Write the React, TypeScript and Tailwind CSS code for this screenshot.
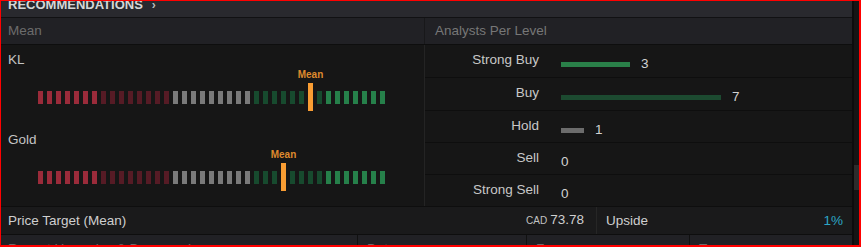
import React from 'react';

type Level = { label: string; count: number; bar: string; h: string };

const levels: Level[] = [
  { label: 'Strong Buy', count: 3, bar: 'bg-[#2a8049]', h: 'h-[33px] border-b' },
  { label: 'Buy', count: 7, bar: 'bg-[#1c4a30]', h: 'h-[33px] border-b' },
  { label: 'Hold', count: 1, bar: 'bg-[#6c6c6c]', h: 'h-[32px] border-b' },
  { label: 'Sell', count: 0, bar: '', h: 'h-[32px] border-b' },
  { label: 'Strong Sell', count: 0, bar: '', h: 'h-[31px]' },
];

const UNIT = 160 / 7;

function segColor(i: number) {
  if (i < 7) return 'bg-[#9b2b3a]';
  if (i < 15) return 'bg-[#561b25]';
  if (i < 24) return 'bg-[#7a7a7a]';
  if (i < 32) return 'bg-[#174a2e]';
  return 'bg-[#26804a]';
}

function Gauge({ mean }: { mean: number }) {
  return (
    <div className="flex items-center gap-[4px] h-[28px] pl-[37px]">
      {Array.from({ length: 39 }, (_, i) =>
        i === mean ? (
          <div key={i} className="relative w-[5px] h-[28px] bg-[#f99d33]">
            <span className="absolute bottom-full mb-[2px] left-1/2 -translate-x-1/2 text-[10px] font-bold leading-[12px] text-[#de8a2e]">
              Mean
            </span>
          </div>
        ) : (
          <div key={i} className={`w-[5px] h-[13px] ${segColor(i)}`} />
        )
      )}
    </div>
  );
}

function Issuer({ name, mean }: { name: string; mean: number }) {
  return (
    <div className="h-[80px] pt-[7px]">
      <div className="px-[7px] leading-[16px] text-[#c4c4c4]">{name}</div>
      <div className="mt-[15px]">
        <Gauge mean={mean} />
      </div>
    </div>
  );
}

export default function App() {
  return (
    <div
      className="w-[861px] h-[247px] flex overflow-hidden border-t border-l border-r-2 border-b-2 border-[#ff0000] bg-[#161616] text-[13.5px] leading-[16px]"
      style={{ fontFamily: '"Liberation Sans", Arial, sans-serif' }}
    >
      <div className="w-[851px] flex flex-col overflow-hidden">
        <div className="h-[17px] shrink-0 border-b border-[#111113] bg-[#29292e] overflow-hidden">
          <div className="-mt-[4px] px-[7px] flex items-center gap-[9px] text-[13px] font-bold text-[#d6d6d6]">
            <span>RECOMMENDATIONS</span>
            <span className="text-[12px] text-[#bdbdbd]">›</span>
          </div>
        </div>

        <div className="h-[27px] shrink-0 flex border-b border-[#0e0e0e] bg-[#212125] text-[#6c6c6c]">
          <div className="w-[424px] flex items-center px-[7px] border-r border-[#18181a]">Mean</div>
          <div className="flex-1 flex items-center pl-[10px] text-[#777]">Analysts Per Level</div>
        </div>

        <div className="h-[162px] shrink-0 flex border-b border-[#0e0e0e]">
          <div className="w-[424px] border-r border-[#242424]">
            <Issuer name="KL" mean={30} />
            <Issuer name="Gold" mean={27} />
          </div>
          <div className="flex-1 flex flex-col">
            {levels.map((l) => (
              <div key={l.label} className={`flex border-[#0e0e0e] ${l.h}`}>
                <div className="w-[114px] pt-[7px] text-right text-[#c8c8c8]">{l.label}</div>
                <div className="ml-[22px] mt-[11px] h-[16px] flex items-center text-[#d2d2d2]">
                  {l.count > 0 && (
                    <div className={`h-[5px] mr-[11px] ${l.bar}`} style={{ width: Math.round(l.count * UNIT) }} />
                  )}
                  <span>{l.count}</span>
                </div>
              </div>
            ))}
          </div>
        </div>

        <div className="h-[28px] shrink-0 flex border-b border-[#0e0e0e] bg-[#1a1a1b] text-[#cfcfcf]">
          <div className="w-[596px] flex items-center justify-between pl-[7px] pr-[12px] border-r border-[#262626]">
            <span>Price Target (Mean)</span>
            <span>
              <span className="text-[10px] mr-[3px] text-[#c2c2c2]">CAD</span>73.78
            </span>
          </div>
          <div className="flex-1 flex items-center justify-between pl-[9px] pr-[9px]">
            <span>Upside</span>
            <span className="text-[#2ca5c4]">1%</span>
          </div>
        </div>

        <div className="h-[27px] shrink-0 flex bg-[#212125] text-[#6c6c6c]">
          <div className="w-[357px] flex items-center px-[7px] border-r border-[#111]">Recent Upgrades &amp; Downgrades</div>
          <div className="w-[169px] flex items-center px-[9px] border-r border-[#111]">Date</div>
          <div className="w-[163px] flex items-center px-[9px] border-r border-[#111]">From</div>
          <div className="flex-1 flex items-center px-[9px]">To</div>
        </div>
      </div>

      <div className="w-[7px] flex flex-col border-l-2 border-[#0c0c0c] bg-[#151515]">
        <div className="mt-[164px] h-[25px] bg-[#2c2c2c]" />
      </div>
    </div>
  );
}
